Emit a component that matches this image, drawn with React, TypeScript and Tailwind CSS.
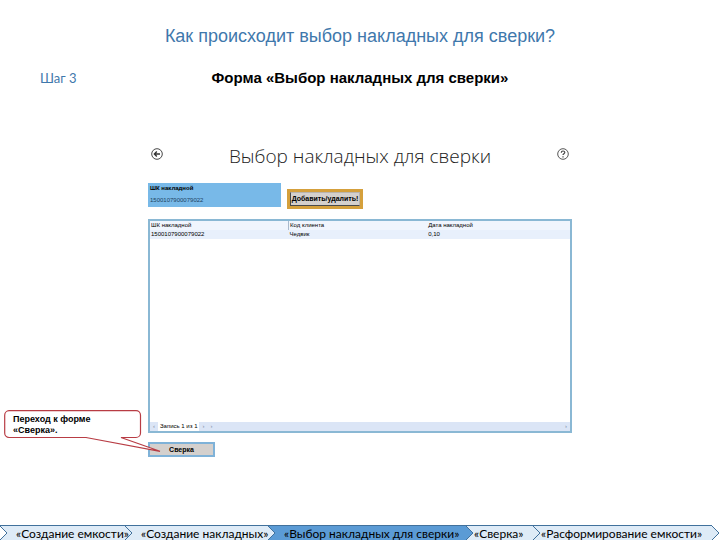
import type { ReactNode } from "react";

const steps = [
  { label: "«Создание емкости»", pad: "pl-4" },
  { label: "«Создание накладных»", pad: "pl-4" },
  { label: "«Выбор накладных для сверки»", pad: "pl-4", active: true },
  { label: "«Сверка»", pad: "pl-2" },
  { label: "«Расформирование емкости»", pad: "pl-2" },
];

const rows = [{ code: "1500107900079022", client: "Чедвик", sum: "0,10" }];

const BackIcon = () => (
  <svg viewBox="0 0 12 12" className="size-3" fill="none" stroke="#333" aria-hidden="true">
    <circle cx="6" cy="6" r="5.3" strokeWidth="0.9" />
    <path d="M9 6H3.4M5.8 3.6L3.4 6l2.4 2.4" strokeWidth="1.4" />
  </svg>
);

const HelpIcon = () => (
  <svg viewBox="0 0 12 12" className="size-3" fill="none" stroke="#444" aria-hidden="true">
    <circle cx="6" cy="6" r="5.3" strokeWidth="0.9" />
    <path d="M4.3 4.7c0-2.2 3.5-2.2 3.5-.2 0 1.2-1.8 1.2-1.8 2.5" strokeWidth="1.2" />
    <path d="M6 8.2v1.2" strokeWidth="1.2" />
  </svg>
);

const Callout = ({ children }: { children: ReactNode }) => (
  <div className="absolute -top-8 -left-36 z-10 h-[42px] w-[157px]">
    <svg viewBox="0 0 157 42" className="absolute inset-0 size-full" aria-hidden="true">
      <path
        d="M5 .7H132a4.500 4.500 0 0 1 4.500 4.500V23a4.500 4.500 0 0 1-4.500 4.500H117L156 41.300 82 27.500H5A4.500 4.500 0 0 1 .7 23V5.200A4.500 4.500 0 0 1 5 .7Z"
        fill="#fff"
        stroke="#b83c44"
        strokeWidth="1.2"
      />
    </svg>
    <p className="relative w-32 pt-1 pl-[9px] text-[9px] leading-[11px] font-bold">
      {children}
    </p>
  </div>
);

const StepBar = () => (
  <nav aria-label="Этапы">
    <ol className="grid h-[15px] grid-cols-[125fr_143fr_198fr_67fr_179fr] pr-2 font-[Lato,sans-serif]">
      {steps.map((step, i) => (
        <li
          key={step.label}
          className={`relative min-w-0 border-t border-[#41719c] ${step.active ? "bg-[#5b9bd5]" : "bg-[#deebf7]"}`}
        >
          {i === 0 && (
            <svg viewBox="0 0 8 15" className="absolute top-0 left-0 h-[15px] w-2" aria-hidden="true">
              <path d="M0 0L7 7 0 14" fill="#fff" stroke="#41719c" />
            </svg>
          )}
          <svg
            viewBox="0 0 8 15"
            className="absolute top-0 -right-2 z-10 h-[15px] w-2"
            aria-hidden="true"
          >
            <path d="M0 0L7 7 0 14" fill={step.active ? "#5b9bd5" : "#deebf7"} stroke="#41719c" />
          </svg>
          <a
            href="#"
            aria-current={step.active ? "step" : undefined}
            className={`relative z-20 block text-[12px] leading-4 whitespace-nowrap ${step.pad}`}
          >
            {step.label}
          </a>
        </li>
      ))}
    </ol>
  </nav>
);

export default function App() {
  return (
    <div className="flex min-h-screen flex-col overflow-hidden bg-white font-['Liberation_Sans',Arial,sans-serif] text-black">
      <header className="pt-6">
        <h1 className="text-center text-[18px] leading-6 text-[#3f78ac]">
          Как происходит выбор накладных для сверки?
        </h1>
        <div className="mt-5 grid grid-cols-[1fr_auto_1fr] items-center">
          <p className="pl-10 font-[Lato,sans-serif] text-[13px] leading-5 text-[#3f78ac]">Шаг 3</p>
          <h2 className="text-[15px] leading-5 font-bold">Форма «Выбор накладных для сверки»</h2>
        </div>
      </header>

      <main className="mx-auto mt-14 flex w-full max-w-[424px] flex-1 flex-col">
        <div className="flex h-6 items-center justify-between px-[3px]">
          <button type="button" aria-label="Назад" className="mb-1">
            <BackIcon />
          </button>
          <h3 className="font-['Open_Sans',sans-serif] text-[19px] leading-6 font-light text-[#222]">
            Выбор накладных для сверки
          </h3>
          <button type="button" aria-label="Справка" className="mb-1">
            <HelpIcon />
          </button>
        </div>

        <div className="mt-[15px] flex items-start gap-1.5">
          <div className="flex h-6 w-[133px] flex-col bg-[#78b9e8] px-0.5">
            <label htmlFor="invoice" className="text-[6px] leading-[11px] font-bold">
              ШК накладной
            </label>
            <input
              id="invoice"
              defaultValue="1500107900079022"
              className="w-full text-[6px] leading-3 text-[#1d4263] outline-none"
            />
          </div>
          <button
            type="button"
            className="mt-1.5 h-5 w-[76px] border-[3px] border-[#d5a03c] bg-[#d4d0cd] text-[7px] font-bold whitespace-nowrap"
          >
            <span className="flex h-full items-center justify-center border border-[#4a4a4a] border-t-[#b9b4ae] border-r-[#b9b4ae]">
              Добавить/удалить!
            </span>
          </button>
        </div>

        <section className="mt-2.5 flex h-[214px] flex-col border-2 border-[#8ab8d4] text-[6px] leading-[9px]">
          <table className="w-full table-fixed text-left">
            <thead className="bg-[#f0f5fd]">
              <tr>
                <th className="w-[33%] px-px font-normal">ШК накладной</th>
                <th className="w-[33%] border-l border-[#a9b9cc] px-px font-normal">Код клиента</th>
                <th className="px-px font-normal">Дата накладной</th>
              </tr>
            </thead>
            <tbody className="bg-[#e8f0fc]">
              {rows.map((row) => (
                <tr key={row.code}>
                  <td className="px-px">{row.code}</td>
                  <td className="px-px">{row.client}</td>
                  <td className="px-px">{row.sum}</td>
                </tr>
              ))}
            </tbody>
          </table>
          <div className="mt-auto flex h-[9px] items-center bg-[#dbe5f6]">
            <button type="button" className="w-2 text-[#7b8ba5]">‹</button>
            <span className="bg-white px-0.5">Запись 1 из 1</span>
            <button type="button" className="w-2 text-[#7b8ba5]">›</button>
            <button type="button" className="w-2 text-[#7b8ba5]">›</button>
            <button type="button" className="ml-auto w-2 text-[#7b8ba5]">›</button>
          </div>
        </section>

        <div className="relative mt-[9px] self-start">
          <button
            type="button"
            className="block h-[15px] w-[67px] border-2 border-[#7fb2d8] bg-[#d4d0cd] text-[7px] leading-[11px] font-bold"
          >
            Сверка
          </button>
          <Callout>Переход к форме «Сверка».</Callout>
        </div>
      </main>

      <StepBar />
    </div>
  );
}
